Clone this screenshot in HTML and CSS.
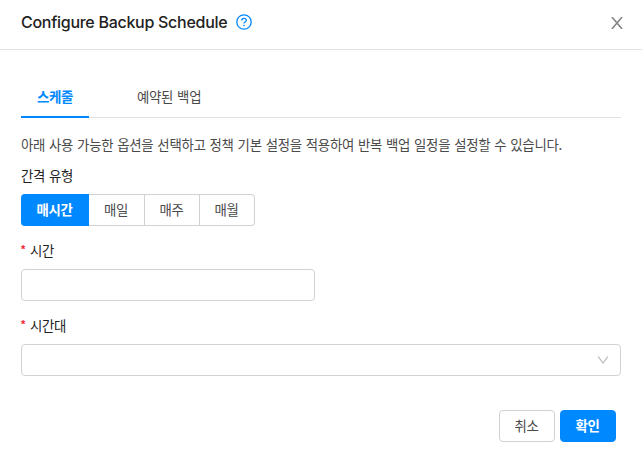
FILE: index.html
```html
<!DOCTYPE html>
<html lang="ko">
<head>
<meta charset="utf-8">
<title>Configure Backup Schedule</title>
<link rel="stylesheet" href="styles.css">
</head>
<body>
<div class="modal">
  <header class="header">
    <h1 class="title">Configure Backup Schedule</h1>
    <svg class="help" viewBox="0 0 16 16" fill="none" stroke="currentColor" stroke-width="1.3"><circle cx="8" cy="8" r="7.2"/><path d="M5.7 6.5C5.7 5 6.7 4.3 8 4.3s2.3.8 2.3 2.1c0 1.5-2.3 1.6-2.3 3.2"/><path d="M8 10.8v1.4"/></svg>
    <svg class="close" viewBox="0 0 12 12" fill="none" stroke="currentColor" stroke-width="1.6"><path d="M.9 0 11.1 12M11.1 0 .9 12"/></svg>
  </header>
  <main class="body">
    <nav class="tabs">
      <div class="tab tab-active">스케줄</div>
      <div class="tab">예약된 백업</div>
    </nav>
    <p class="description">아래 사용 가능한 옵션을 선택하고 정책 기본 설정을 적용하여 반복 백업 일정을 설정할 수 있습니다.</p>
    <div class="label">간격 유형</div>
    <div class="segments">
      <div class="segment segment-active">매시간</div>
      <div class="segment">매일</div>
      <div class="segment">매주</div>
      <div class="segment">매월</div>
    </div>
    <div class="label label-required"><span class="required">*</span>시간</div>
    <div class="field field-short"></div>
    <div class="label label-required"><span class="required">*</span>시간대</div>
    <div class="field">
      <svg class="chevron" viewBox="0 0 12 8" fill="none" stroke="currentColor" stroke-width="1.1"><path d="M1.3.6 6 7 10.7.6"/></svg>
    </div>
  </main>
  <footer class="footer">
    <div class="button">취소</div>
    <div class="button button-primary">확인</div>
  </footer>
</div>
</body>
</html>
```
FILE: styles.css
```css
* { box-sizing: border-box; }
body {
  margin: 0;
  background: #fff;
  color: #4a4a4a;
  font: 13.4px/20px "Noto Sans CJK KR", sans-serif;
  letter-spacing: -0.26px;
  word-spacing: 0.45px;
}
.modal { width: 642px; height: 471px; overflow: hidden; }
.header {
  display: flex;
  align-items: center;
  height: 50px;
  padding: 0 19px 5px 21px;
  border-bottom: 1px solid #e1e1e1;
}
.title {
  margin: 0;
  color: #222;
  font: 500 16px/22px Inter, sans-serif;
  letter-spacing: -0.28px;
  word-spacing: 0;
}
.help { width: 16px; height: 16px; margin-left: 9px; color: #0088ff; }
.close { width: 12px; height: 12px; margin: 1px 0 0 auto; color: #858585; }
.body { padding: 27px 21px 0; }
.tabs {
  display: flex;
  gap: 32px;
  height: 41px;
  border-bottom: 1px solid #e1e1e1;
}
.tab { height: 41px; padding: 9px 16px 0; white-space: nowrap; }
.tab-active {
  width: 68px;
  color: #0088ff;
  font-weight: 700;
  border-bottom: 2px solid #0088ff;
}
.description { margin: 16px 0 11px; white-space: nowrap; }
.label { height: 20px; color: #222; }
.label-required { line-height: 18px; }
.required {
  display: inline-block;
  width: 9px;
  color: #f5222d;
  font: 700 11px/12px "Liberation Sans", sans-serif;
  vertical-align: 3px;
}
.segments { display: flex; width: max-content; margin: 9px 0 15px; }
.segment {
  width: 55px;
  height: 32px;
  padding-right: 1px;
  border: 1px solid #d2d2d2;
  border-left: 0;
  line-height: 28px;
  text-align: center;
}
.segment:nth-child(2) { width: 56px; }
.segment:last-child { border-radius: 0 4px 4px 0; }
.segment-active {
  width: 68px;
  padding-right: 0;
  border-color: #0088ff;
  border-radius: 4px 0 0 4px;
  background: #0088ff;
  color: #fff;
  font-weight: 700;
}
.field {
  display: flex;
  align-items: center;
  justify-content: flex-end;
  height: 32px;
  margin: 8px 0 15px;
  padding-right: 11px;
  border: 1px solid #d2d2d2;
  border-radius: 4px;
}
.field-short { width: 294px; }
.chevron { width: 12px; height: 8px; color: #b8b8b8; }
.footer {
  display: flex;
  justify-content: flex-end;
  gap: 5px;
  padding: 19px 26px 0 0;
}
.button {
  width: 56px;
  height: 32px;
  padding-right: 1px;
  border: 1px solid #d2d2d2;
  border-radius: 4px;
  line-height: 28px;
  text-align: center;
}
.button-primary { border-color: #0088ff; background: #0088ff; color: #fff; font-weight: 700; }
```
